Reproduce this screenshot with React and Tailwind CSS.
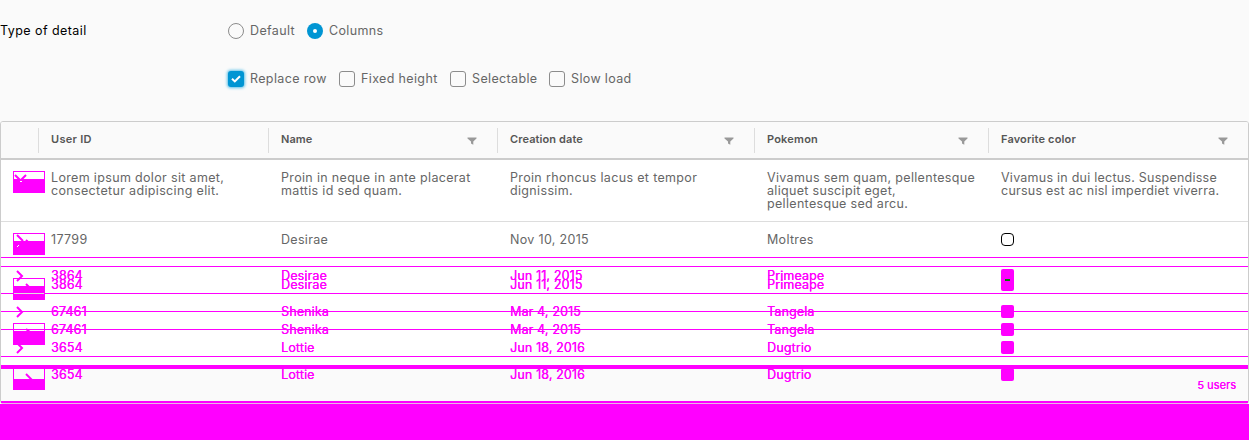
const GRID = "grid grid-cols-[38px_230px_229px_257px_234px_259px]";

const HEADERS = [
  { label: "User ID", filter: false, tracking: "tracking-[0.3px]" },
  { label: "Name", filter: true, tracking: "tracking-[0.1px]" },
  { label: "Creation date", filter: true, tracking: "tracking-[0.1px]" },
  { label: "Pokemon", filter: true, tracking: "tracking-[0.2px]" },
  { label: "Favorite color", filter: true, tracking: "tracking-[0.15px]" },
];

const DETAIL = [
  { lines: ["Lorem ipsum dolor sit amet,", "consectetur adipiscing elit."], tracking: "tracking-[0.34px]" },
  { lines: ["Proin in neque in ante placerat", "mattis id sed quam."], tracking: "tracking-[0.33px]" },
  { lines: ["Proin rhoncus lacus et tempor", "dignissim."], tracking: "tracking-[0.34px]" },
  { lines: ["Vivamus sem quam, pellentesque", "aliquet suscipit eget,", "pellentesque sed arcu."], tracking: "tracking-[0.32px]" },
  { lines: ["Vivamus in dui lectus. Suspendisse", "cursus est ac nisl imperdiet viverra."], tracking: "tracking-[0.24px]" },
];

const GHOST_ROWS = [
  { top: "top-[268px]", cells: ["3864", "Desirae", "Jun 11, 2015", "Primeape"], caret: true },
  { top: "top-[277px]", cells: ["3864", "Desirae", "Jun 11, 2015", "Primeape"] },
  { top: "top-[304px]", cells: ["67461", "Shenika", "Mar 4, 2015", "Tangela"], caret: true },
  { top: "top-[322px]", cells: ["67461", "Shenika", "Mar 4, 2015", "Tangela"] },
  { top: "top-[340px]", cells: ["3654", "Lottie", "Jun 18, 2016", "Dugtrio"], caret: true },
  { top: "top-[367px]", cells: ["3654", "Lottie", "Jun 18, 2016", "Dugtrio"] },
];

const LINES = ["top-[257px]", "top-[266px]", "top-[293px]", "top-[311px]", "top-[329px]", "top-[356px]"];

function Radio({ label, checked }) {
  return (
    <label className="flex h-4 items-center gap-[6px]">
      {checked ? (
        <span className="flex size-4 items-center justify-center rounded-full bg-[#0095d3]">
          <span className="size-1 rounded-full bg-white" />
        </span>
      ) : (
        <span className="size-4 rounded-full border border-[#8c8c8c]" />
      )}
      <span className="-mt-px">{label}</span>
    </label>
  );
}

function Checkbox({ label, checked, width }) {
  return (
    <label className={`flex h-4 items-center gap-[6px] ${width}`}>
      {checked ? (
        <span className="flex size-4 shrink-0 items-center justify-center rounded-[3px] bg-[#0095d3] shadow-[0_0_3px_1px_#5cc0e8]">
          <svg width="10" height="8" viewBox="0 0 10 8" fill="none" stroke="white" strokeWidth="2">
            <path d="M1 3.8 3.8 6.4 9 1.2" />
          </svg>
        </span>
      ) : (
        <span className="size-4 shrink-0 rounded-[3px] border border-[#8c8c8c]" />
      )}
      <span className="-mt-px whitespace-nowrap">{label}</span>
    </label>
  );
}

function Funnel() {
  return (
    <svg width="10" height="8" viewBox="0 0 10 8" fill="#999999">
      <path d="M.5.5h9v1L6.3 4.6V7.7L4 6.6v-2L.5 1.5z" />
    </svg>
  );
}

function Caret() {
  return (
    <svg className="block" width="24" height="12" viewBox="0 0 24 12" fill="none" stroke="#ff00ff" strokeWidth="2">
      <path d="M2 1 7 6 2 11" />
    </svg>
  );
}

function ToggleBox({ top, fill = "h-[13px]", d, dot }) {
  return (
    <div className={`absolute left-[13px] h-[22px] w-8 border border-[#ff00ff] ${top}`}>
      <div className={`absolute inset-x-0 bottom-0 bg-[#ff00ff] ${fill}`} />
      <svg className="absolute left-0 top-0" width="30" height="20" viewBox="0 0 30 20" fill="none">
        <path d={d} stroke="#ff00ff" strokeWidth="2" />
        {dot && <path d={dot} fill="white" />}
      </svg>
    </div>
  );
}

export default function App() {
  return (
    <div className="relative h-[440px] w-[1249px] overflow-hidden bg-[#fafafa] font-['Inter','Liberation_Sans',sans-serif] text-[12.5px] leading-[13px] tracking-[0.32px] text-[#666666]">
      <div className="flex h-[121px]">
        <div className="w-[228px] pt-6 tracking-[0.44px] text-black">Type of detail</div>
        <div className="flex flex-col gap-8 pt-[23px] tracking-[0.36px]">
          <div className="flex gap-3">
            <Radio label="Default" />
            <Radio label="Columns" checked />
          </div>
          <div className="flex">
            <Checkbox label="Replace row" checked width="w-[111px]" />
            <Checkbox label="Fixed height" width="w-[111px]" />
            <Checkbox label="Selectable" width="w-[99px]" />
            <Checkbox label="Slow load" width="w-[90px]" />
          </div>
        </div>
      </div>

      <div className="h-[283px] rounded-[3px] border border-[#cccccc] bg-white">
        <div className={`${GRID} h-[38px] rounded-t-[2px] border-b-2 border-[#cccccc] bg-[#fafafa] pt-[6px]`}>
          <div className="h-[25px] border-r border-[#dddddd]" />
          {HEADERS.map((h, i) => (
            <div
              key={h.label}
              className={`flex h-[25px] items-center justify-between pl-3 pr-5 text-[11px] font-semibold text-[#565656] ${i < 4 ? "border-r border-[#dddddd]" : ""}`}
            >
              <span className={`-mt-[2px] ${h.tracking}`}>{h.label}</span>
              {h.filter && <Funnel />}
            </div>
          ))}
        </div>
        <div className={`${GRID} h-[62px] border-b border-[#dddddd] pt-[11px]`}>
          <div />
          {DETAIL.map(({ lines, tracking }) => (
            <div key={lines[0]} className={`whitespace-nowrap pl-3 ${tracking}`}>
              {lines.map((line) => (
                <div key={line}>{line}</div>
              ))}
            </div>
          ))}
        </div>
        <div className={`${GRID} h-[34px] items-center`}>
          <div />
          <div className="pl-3">17799</div>
          <div className="pl-3">Desirae</div>
          <div className="pl-3">Nov 10, 2015</div>
          <div className="pl-3">Moltres</div>
          <div className="pl-3">
            <div className="size-[13px] rounded-[4px] border border-black bg-white" />
          </div>
        </div>
      </div>

      <div className="absolute inset-x-px top-[369px] h-8 bg-[#fafafa]" />

      <ToggleBox top="top-[171px]" d="M1 3 6.5 8.5 12 3M19 8h2" dot="M6 9h2v1H6z" />
      <ToggleBox top="top-[233px]" d="M3 1 9 7M12 6l3 3" dot="M3 12h1v1H3zM4 11h1v1H4z" />
      <ToggleBox top="top-[278px]" d="M12 5l4 4" />
      <ToggleBox top="top-[323px]" d="M12 5l4 3" />
      <ToggleBox top="top-[368px]" fill="h-[10px]" d="M12 5 18 11" />

      {LINES.map((top) => (
        <div key={top} className={`absolute inset-x-px h-px bg-[#ff00ff] ${top}`} />
      ))}
      <div className="absolute left-[14px] top-[293px] h-px w-[30px] bg-[#dddddd]" />

      {GHOST_ROWS.map((row) => (
        <div
          key={row.top}
          className={`absolute left-px flex h-[15px] items-center tracking-[0.12px] text-[#ff00ff] [text-shadow:0.3px_0_#ff00ff] ${row.top}`}
        >
          <div className={`${GRID} items-center`}>
            <div className="pl-[14px]">{row.caret && <Caret />}</div>
            {row.cells.map((cell) => (
              <div key={cell} className="pl-3">{cell}</div>
            ))}
            <div className="pl-3">
              <div className="h-[13px] w-[13px] rounded-[2px] bg-[#ff00ff]" />
            </div>
          </div>
        </div>
      ))}
      <div className="absolute left-[1001px] top-[276px] h-2 w-[13px] bg-[#ff00ff]" />
      <div className="absolute left-[1005px] top-[279px] h-[2px] w-[5px] bg-[#008000]" />

      <div className="absolute inset-x-px top-[365px] h-1 bg-[#ff00ff]" />
      <div className="absolute right-[13px] top-[379px] text-[11px] tracking-[0.05px] text-[#ff00ff] [text-shadow:0.3px_0_#ff00ff]">5 users</div>
      <div className="absolute inset-x-px top-[401px] h-[2px] bg-[#ff00ff]" />
      <div className="absolute inset-x-[2px] top-[403px] h-px bg-[#e6b8e6]" />
      <div className="absolute inset-x-0 top-[404px] h-9 bg-[#ff00ff]" />
    </div>
  );
}
